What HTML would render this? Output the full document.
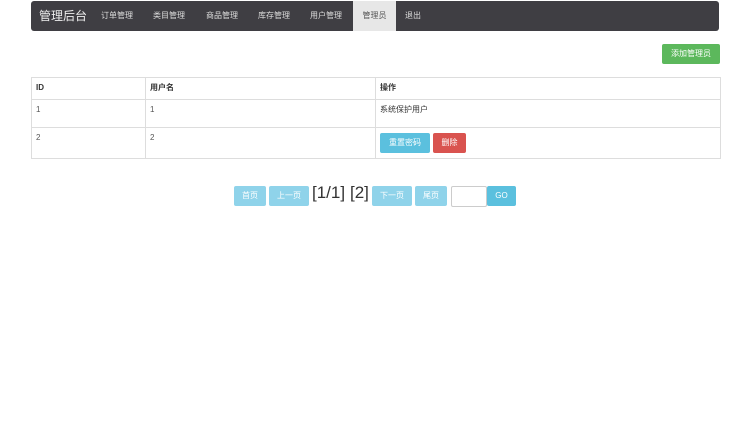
<!DOCTYPE html><html><head><meta charset="utf-8"><style>
body{margin:0;width:750px;height:423px;background:#fff;font-family:"Liberation Sans","Noto Sans CJK SC",sans-serif;font-size:8px;color:#333;position:relative}
.a{position:absolute}
.nav{left:31px;top:1px;width:688px;height:30px;background:#3f3e43;border-radius:3px}
.nav span{position:absolute;top:0;line-height:30px;color:#ddd;font-size:8px}
.btn{position:absolute;color:#fff;font-size:8px;text-align:center;border-radius:2px}
td{border:1px solid #ddd;padding:0 4px;vertical-align:top}
table{border-collapse:collapse;position:absolute;left:31px;top:77px;width:690px}
</style></head><body>
<div class="a nav">
<span style="left:8px;font-size:12px;color:#eee">管理后台</span>
<span style="left:70px">订单管理</span>
<span style="left:122px">类目管理</span>
<span style="left:175px">商品管理</span>
<span style="left:227px">库存管理</span>
<span style="left:279px">用户管理</span>
<span style="left:322px;width:43px;height:30px;background:#e7e7e7;color:#555;text-align:center">管理员</span>
<span style="left:374px">退出</span>
</div>
<div class="btn" style="left:662px;top:44px;width:58px;height:20px;line-height:20px;background:#5cb85c">添加管理员</div>
<table>
<tr style="height:22px"><td style="width:105px;font-weight:bold;line-height:20px">ID</td><td style="width:221px;font-weight:bold;line-height:20px">用户名</td><td style="font-weight:bold;line-height:20px">操作</td></tr>
<tr style="height:28px"><td style="line-height:20px;color:#555">1</td><td style="line-height:20px;color:#555">1</td><td style="line-height:20px">系统保护用户</td></tr>
<tr style="height:31px"><td style="line-height:20px;color:#555">2</td><td style="line-height:20px;color:#555">2</td><td style="position:relative"><div class="btn" style="left:4px;top:5px;width:50px;height:20px;line-height:20px;background:#5bc0de">重置密码</div><div class="btn" style="left:57px;top:5px;width:33px;height:20px;line-height:20px;background:#d9534f">删除</div></td></tr>
</table>
<div class="btn" style="left:234px;top:186px;width:32px;height:20px;line-height:20px;background:#8fd3ea">首页</div>
<div class="btn" style="left:269px;top:186px;width:40px;height:20px;line-height:20px;background:#8fd3ea">上一页</div>
<div class="a" style="left:312px;top:183px;font-size:17px;line-height:20px">[1/1]</div>
<div class="a" style="left:350px;top:183px;font-size:17px;line-height:20px">[2]</div>
<div class="btn" style="left:372px;top:186px;width:40px;height:20px;line-height:20px;background:#8fd3ea">下一页</div>
<div class="btn" style="left:415px;top:186px;width:32px;height:20px;line-height:20px;background:#8fd3ea">尾页</div>
<div class="a" style="left:451px;top:186px;width:34px;height:19px;border:1px solid #ccc;border-radius:2px"></div>
<div class="btn" style="left:487px;top:186px;width:29px;height:20px;line-height:20px;background:#5bc0de">GO</div>
</body></html>
